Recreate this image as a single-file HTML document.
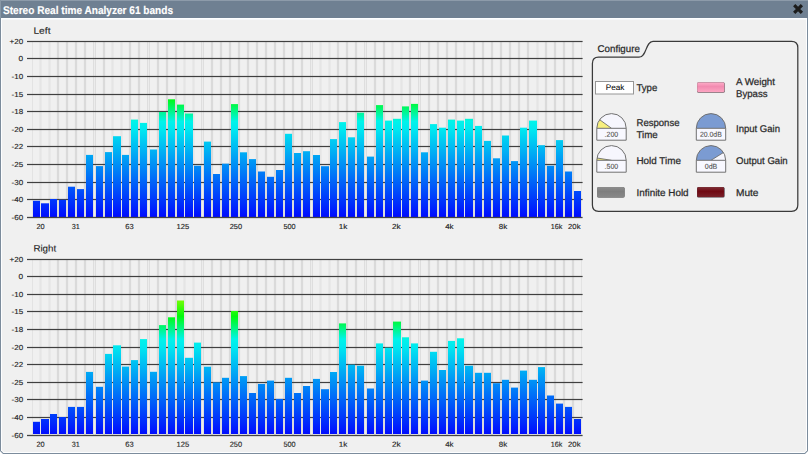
<!DOCTYPE html>
<html lang="en"><head><meta charset="utf-8"><title>Stereo Real time Analyzer 61 bands</title>
<style>html,body{margin:0;padding:0;background:#fff;overflow:hidden}svg{display:block;font-family:"Liberation Sans", sans-serif}</style>
</head><body>
<svg width="808" height="454" viewBox="0 0 808 454">
<defs>
<linearGradient id="gl" gradientUnits="userSpaceOnUse" x1="0" y1="41.4" x2="0" y2="217.4">
<stop offset="0.0000" stop-color="#ff0000"/>
<stop offset="0.1250" stop-color="#ffff00"/>
<stop offset="0.3239" stop-color="#00fa0c"/>
<stop offset="0.4545" stop-color="#00f4ea"/>
<stop offset="0.5000" stop-color="#00e8f0"/>
<stop offset="1.0000" stop-color="#000aff"/>
</linearGradient>
<linearGradient id="gr" gradientUnits="userSpaceOnUse" x1="0" y1="259.2" x2="0" y2="435.2">
<stop offset="0.0000" stop-color="#ff0000"/>
<stop offset="0.1250" stop-color="#ffff00"/>
<stop offset="0.3239" stop-color="#00fa0c"/>
<stop offset="0.4545" stop-color="#00f4ea"/>
<stop offset="0.5000" stop-color="#00e8f0"/>
<stop offset="1.0000" stop-color="#000aff"/>
</linearGradient>
</defs>
<path d="M0 0H808V451L805 454H3L0 451Z" fill="#7c8c9c"/>
<path d="M1 18H807V450.6L804.6 453H3.4L1 450.6Z" fill="#fdfeff"/>
<path d="M2 19H806V450.2L804.2 452H3.8L2 450.2Z" fill="#f0f0f0"/>
<rect x="2" y="19" width="804" height="1" fill="#f6f8fa"/>
<rect x="0" y="0" width="808" height="18" fill="#6f8092"/>
<rect x="0" y="0" width="808" height="1" fill="#8d9baa"/>
<rect x="0" y="0" width="1" height="18" fill="#8797a6"/>
<text x="3" y="14" font-size="11.2" fill="#fff" stroke="#fff" stroke-width="0.15" font-weight="bold" textLength="170" lengthAdjust="spacingAndGlyphs" transform="rotate(0.03 3 14)">Stereo Real time Analyzer 61 bands</text>
<path d="M794.2 5.2L801.9 12.9M801.9 5.2L794.2 12.9" stroke="#1c1c1c" stroke-width="3.2" stroke-linecap="butt" fill="none"/>
<rect x="32" y="41.4" width="1" height="176" fill="#e3e3e3"/>
<rect x="581" y="41.4" width="1" height="176" fill="#e3e3e3"/>
<rect x="39.3" y="41.4" width="2.4" height="176" fill="#e5e5e5"/>
<rect x="48.3" y="41.4" width="2.4" height="176" fill="#e5e5e5"/>
<rect x="56.85" y="41.4" width="2.3" height="176" fill="#dadada"/>
<rect x="65.85" y="41.4" width="2.3" height="176" fill="#dadada"/>
<rect x="74.85" y="41.4" width="2.3" height="176" fill="#dadada"/>
<rect x="83.85" y="41.4" width="2.3" height="176" fill="#dadada"/>
<rect x="93.1" y="41.4" width="1" height="176" fill="#dcdcdc"/><rect x="94.9" y="41.4" width="1" height="176" fill="#dcdcdc"/>
<rect x="102.85" y="41.4" width="2.3" height="176" fill="#dadada"/>
<rect x="111.3" y="41.4" width="2.4" height="176" fill="#e5e5e5"/>
<rect x="120.3" y="41.4" width="2.4" height="176" fill="#e5e5e5"/>
<rect x="128.85" y="41.4" width="2.3" height="176" fill="#dadada"/>
<rect x="137.85" y="41.4" width="2.3" height="176" fill="#dadada"/>
<rect x="147.1" y="41.4" width="1" height="176" fill="#dcdcdc"/><rect x="148.9" y="41.4" width="1" height="176" fill="#dcdcdc"/>
<rect x="156.85" y="41.4" width="2.3" height="176" fill="#dadada"/>
<rect x="165.85" y="41.4" width="2.3" height="176" fill="#dadada"/>
<rect x="174.85" y="41.4" width="2.3" height="176" fill="#dadada"/>
<rect x="183.3" y="41.4" width="2.4" height="176" fill="#e5e5e5"/>
<rect x="192.3" y="41.4" width="2.4" height="176" fill="#e5e5e5"/>
<rect x="201.1" y="41.4" width="1" height="176" fill="#dcdcdc"/><rect x="202.9" y="41.4" width="1" height="176" fill="#dcdcdc"/>
<rect x="210.85" y="41.4" width="2.3" height="176" fill="#dadada"/>
<rect x="219.85" y="41.4" width="2.3" height="176" fill="#dadada"/>
<rect x="228.85" y="41.4" width="2.3" height="176" fill="#dadada"/>
<rect x="237.85" y="41.4" width="2.3" height="176" fill="#dadada"/>
<rect x="246.85" y="41.4" width="2.3" height="176" fill="#dadada"/>
<rect x="255.85" y="41.4" width="2.3" height="176" fill="#dadada"/>
<rect x="264.85" y="41.4" width="2.3" height="176" fill="#dadada"/>
<rect x="273.85" y="41.4" width="2.3" height="176" fill="#dadada"/>
<rect x="282.85" y="41.4" width="2.3" height="176" fill="#dadada"/>
<rect x="291.85" y="41.4" width="2.3" height="176" fill="#dadada"/>
<rect x="300.85" y="41.4" width="2.3" height="176" fill="#dadada"/>
<rect x="310.1" y="41.4" width="1" height="176" fill="#dcdcdc"/><rect x="311.9" y="41.4" width="1" height="176" fill="#dcdcdc"/>
<rect x="319.3" y="41.4" width="2.4" height="176" fill="#e5e5e5"/>
<rect x="328.3" y="41.4" width="2.4" height="176" fill="#e5e5e5"/>
<rect x="336.85" y="41.4" width="2.3" height="176" fill="#dadada"/>
<rect x="345.85" y="41.4" width="2.3" height="176" fill="#dadada"/>
<rect x="354.85" y="41.4" width="2.3" height="176" fill="#dadada"/>
<rect x="364.1" y="41.4" width="1" height="176" fill="#dcdcdc"/><rect x="365.9" y="41.4" width="1" height="176" fill="#dcdcdc"/>
<rect x="373.85" y="41.4" width="2.3" height="176" fill="#dadada"/>
<rect x="382.85" y="41.4" width="2.3" height="176" fill="#dadada"/>
<rect x="391.3" y="41.4" width="2.4" height="176" fill="#e5e5e5"/>
<rect x="400.3" y="41.4" width="2.4" height="176" fill="#e5e5e5"/>
<rect x="408.85" y="41.4" width="2.3" height="176" fill="#dadada"/>
<rect x="418.1" y="41.4" width="1" height="176" fill="#dcdcdc"/><rect x="419.9" y="41.4" width="1" height="176" fill="#dcdcdc"/>
<rect x="427.85" y="41.4" width="2.3" height="176" fill="#dadada"/>
<rect x="436.85" y="41.4" width="2.3" height="176" fill="#dadada"/>
<rect x="445.85" y="41.4" width="2.3" height="176" fill="#dadada"/>
<rect x="454.85" y="41.4" width="2.3" height="176" fill="#dadada"/>
<rect x="463.3" y="41.4" width="2.4" height="176" fill="#e5e5e5"/>
<rect x="472.85" y="41.4" width="2.3" height="176" fill="#dadada"/>
<rect x="481.85" y="41.4" width="2.3" height="176" fill="#dadada"/>
<rect x="490.85" y="41.4" width="2.3" height="176" fill="#dadada"/>
<rect x="499.85" y="41.4" width="2.3" height="176" fill="#dadada"/>
<rect x="508.85" y="41.4" width="2.3" height="176" fill="#dadada"/>
<rect x="517.85" y="41.4" width="2.3" height="176" fill="#dadada"/>
<rect x="526.85" y="41.4" width="2.3" height="176" fill="#dadada"/>
<rect x="536.3" y="41.4" width="2.4" height="176" fill="#e5e5e5"/>
<rect x="544.85" y="41.4" width="2.3" height="176" fill="#dadada"/>
<rect x="553.85" y="41.4" width="2.3" height="176" fill="#dadada"/>
<rect x="562.85" y="41.4" width="2.3" height="176" fill="#dadada"/>
<rect x="571.85" y="41.4" width="2.3" height="176" fill="#dadada"/>
<g fill="#404040">
<rect x="27" y="40.90" width="555.6" height="1.2"/>
<rect x="27" y="57.90" width="555.6" height="1.2"/>
<rect x="27" y="75.90" width="555.6" height="1.2"/>
<rect x="27" y="93.90" width="555.6" height="1.2"/>
<rect x="27" y="110.90" width="555.6" height="1.2"/>
<rect x="27" y="128.90" width="555.6" height="1.2"/>
<rect x="27" y="145.90" width="555.6" height="1.2"/>
<rect x="27" y="163.90" width="555.6" height="1.2"/>
<rect x="27" y="181.90" width="555.6" height="1.2"/>
<rect x="27" y="198.90" width="555.6" height="1.2"/>
</g>
<g fill="url(#gl)">
<rect x="33" y="200.8" width="7" height="16.2"/>
<rect x="41" y="203.3" width="8" height="13.7"/>
<rect x="50" y="199.0" width="7" height="18.0"/>
<rect x="59" y="199.8" width="7" height="17.2"/>
<rect x="68" y="186.7" width="7" height="30.3"/>
<rect x="77" y="189.1" width="7" height="27.9"/>
<rect x="86" y="154.9" width="7" height="62.1"/>
<rect x="96" y="166.1" width="7" height="50.9"/>
<rect x="105" y="152.1" width="7" height="64.9"/>
<rect x="113" y="136.2" width="8" height="80.8"/>
<rect x="122" y="154.9" width="7" height="62.1"/>
<rect x="131" y="119.6" width="7" height="97.4"/>
<rect x="140" y="122.9" width="7" height="94.1"/>
<rect x="150" y="149.5" width="7" height="67.5"/>
<rect x="159" y="112.0" width="7" height="105.0"/>
<rect x="168" y="99.3" width="7" height="117.7"/>
<rect x="177" y="104.6" width="7" height="112.4"/>
<rect x="185" y="113.5" width="8" height="103.5"/>
<rect x="194" y="165.7" width="7" height="51.3"/>
<rect x="204" y="141.6" width="7" height="75.4"/>
<rect x="213" y="174.0" width="7" height="43.0"/>
<rect x="222" y="163.7" width="7" height="53.3"/>
<rect x="231" y="104.1" width="7" height="112.9"/>
<rect x="240" y="152.3" width="7" height="64.7"/>
<rect x="249" y="159.1" width="7" height="57.9"/>
<rect x="258" y="171.5" width="7" height="45.5"/>
<rect x="267" y="176.8" width="7" height="40.2"/>
<rect x="276" y="170.0" width="7" height="47.0"/>
<rect x="285" y="133.8" width="7" height="83.2"/>
<rect x="294" y="153.0" width="7" height="64.0"/>
<rect x="303" y="151.2" width="7" height="65.8"/>
<rect x="313" y="155.0" width="7" height="62.0"/>
<rect x="321" y="166.2" width="8" height="50.8"/>
<rect x="330" y="139.1" width="7" height="77.9"/>
<rect x="339" y="122.1" width="7" height="94.9"/>
<rect x="348" y="137.3" width="7" height="79.7"/>
<rect x="357" y="112.7" width="7" height="104.3"/>
<rect x="367" y="156.6" width="7" height="60.4"/>
<rect x="376" y="105.1" width="7" height="111.9"/>
<rect x="385" y="120.6" width="7" height="96.4"/>
<rect x="393" y="118.8" width="8" height="98.2"/>
<rect x="402" y="106.4" width="7" height="110.6"/>
<rect x="411" y="103.9" width="7" height="113.1"/>
<rect x="421" y="152.3" width="7" height="64.7"/>
<rect x="430" y="124.1" width="7" height="92.9"/>
<rect x="439" y="127.7" width="7" height="89.3"/>
<rect x="448" y="119.6" width="7" height="97.4"/>
<rect x="457" y="120.6" width="7" height="96.4"/>
<rect x="465" y="118.8" width="8" height="98.2"/>
<rect x="475" y="125.9" width="7" height="91.1"/>
<rect x="484" y="140.9" width="7" height="76.1"/>
<rect x="493" y="158.3" width="7" height="58.7"/>
<rect x="502" y="135.5" width="7" height="81.5"/>
<rect x="511" y="161.1" width="7" height="55.9"/>
<rect x="520" y="127.7" width="7" height="89.3"/>
<rect x="529" y="120.6" width="8" height="96.4"/>
<rect x="538" y="145.2" width="7" height="71.8"/>
<rect x="547" y="165.7" width="7" height="51.3"/>
<rect x="556" y="140.1" width="7" height="76.9"/>
<rect x="565" y="171.5" width="7" height="45.5"/>
<rect x="574" y="191.0" width="7" height="26.0"/>
</g>
<rect x="27" y="216.85" width="555.6" height="1.3" fill="#444"/>
<text x="9.5" y="44.1" font-size="7.3" fill="#222" stroke="#222" stroke-width="0.12" font-weight="normal" textLength="13.6" lengthAdjust="spacingAndGlyphs" transform="rotate(0.03 9.5 44.1)">+20</text>
<text x="18.5" y="61.1" font-size="7.3" fill="#222" stroke="#222" stroke-width="0.12" font-weight="normal" textLength="4.6" lengthAdjust="spacingAndGlyphs" transform="rotate(0.03 18.5 61.1)">0</text>
<text x="11.5" y="79.1" font-size="7.3" fill="#222" stroke="#222" stroke-width="0.12" font-weight="normal" textLength="11.6" lengthAdjust="spacingAndGlyphs" transform="rotate(0.03 11.5 79.1)">-10</text>
<text x="11.5" y="97.1" font-size="7.3" fill="#222" stroke="#222" stroke-width="0.12" font-weight="normal" textLength="11.6" lengthAdjust="spacingAndGlyphs" transform="rotate(0.03 11.5 97.1)">-15</text>
<text x="11.5" y="114.1" font-size="7.3" fill="#222" stroke="#222" stroke-width="0.12" font-weight="normal" textLength="11.6" lengthAdjust="spacingAndGlyphs" transform="rotate(0.03 11.5 114.1)">-18</text>
<text x="11.5" y="132.1" font-size="7.3" fill="#222" stroke="#222" stroke-width="0.12" font-weight="normal" textLength="11.6" lengthAdjust="spacingAndGlyphs" transform="rotate(0.03 11.5 132.1)">-20</text>
<text x="11.5" y="149.1" font-size="7.3" fill="#222" stroke="#222" stroke-width="0.12" font-weight="normal" textLength="11.6" lengthAdjust="spacingAndGlyphs" transform="rotate(0.03 11.5 149.1)">-22</text>
<text x="11.5" y="167.1" font-size="7.3" fill="#222" stroke="#222" stroke-width="0.12" font-weight="normal" textLength="11.6" lengthAdjust="spacingAndGlyphs" transform="rotate(0.03 11.5 167.1)">-25</text>
<text x="11.5" y="185.1" font-size="7.3" fill="#222" stroke="#222" stroke-width="0.12" font-weight="normal" textLength="11.6" lengthAdjust="spacingAndGlyphs" transform="rotate(0.03 11.5 185.1)">-30</text>
<text x="11.5" y="202.1" font-size="7.3" fill="#222" stroke="#222" stroke-width="0.12" font-weight="normal" textLength="11.6" lengthAdjust="spacingAndGlyphs" transform="rotate(0.03 11.5 202.1)">-40</text>
<text x="11.5" y="220.1" font-size="7.3" fill="#222" stroke="#222" stroke-width="0.12" font-weight="normal" textLength="11.6" lengthAdjust="spacingAndGlyphs" transform="rotate(0.03 11.5 220.1)">-60</text>
<text x="36.5" y="229.0" font-size="7.3" fill="#222" stroke="#222" stroke-width="0.12" font-weight="normal" textLength="8.2" lengthAdjust="spacingAndGlyphs" transform="rotate(0.03 36.5 229.0)">20</text>
<text x="71.8" y="229.0" font-size="7.3" fill="#222" stroke="#222" stroke-width="0.12" font-weight="normal" textLength="8.1" lengthAdjust="spacingAndGlyphs" transform="rotate(0.03 71.8 229.0)">31</text>
<text x="125.2" y="229.0" font-size="7.3" fill="#222" stroke="#222" stroke-width="0.12" font-weight="normal" textLength="8.4" lengthAdjust="spacingAndGlyphs" transform="rotate(0.03 125.2 229.0)">63</text>
<text x="176.5" y="229.0" font-size="7.3" fill="#222" stroke="#222" stroke-width="0.12" font-weight="normal" textLength="12.7" lengthAdjust="spacingAndGlyphs" transform="rotate(0.03 176.5 229.0)">125</text>
<text x="229.7" y="229.0" font-size="7.3" fill="#222" stroke="#222" stroke-width="0.12" font-weight="normal" textLength="12.4" lengthAdjust="spacingAndGlyphs" transform="rotate(0.03 229.7 229.0)">250</text>
<text x="283.4" y="229.0" font-size="7.3" fill="#222" stroke="#222" stroke-width="0.12" font-weight="normal" textLength="12.2" lengthAdjust="spacingAndGlyphs" transform="rotate(0.03 283.4 229.0)">500</text>
<text x="338.8" y="229.0" font-size="7.3" fill="#222" stroke="#222" stroke-width="0.12" font-weight="normal" textLength="8.6" lengthAdjust="spacingAndGlyphs" transform="rotate(0.03 338.8 229.0)">1k</text>
<text x="391.9" y="229.0" font-size="7.3" fill="#222" stroke="#222" stroke-width="0.12" font-weight="normal" textLength="8.7" lengthAdjust="spacingAndGlyphs" transform="rotate(0.03 391.9 229.0)">2k</text>
<text x="445.2" y="229.0" font-size="7.3" fill="#222" stroke="#222" stroke-width="0.12" font-weight="normal" textLength="8.4" lengthAdjust="spacingAndGlyphs" transform="rotate(0.03 445.2 229.0)">4k</text>
<text x="498.8" y="229.0" font-size="7.3" fill="#222" stroke="#222" stroke-width="0.12" font-weight="normal" textLength="8.4" lengthAdjust="spacingAndGlyphs" transform="rotate(0.03 498.8 229.0)">8k</text>
<text x="550.8" y="229.0" font-size="7.3" fill="#222" stroke="#222" stroke-width="0.12" font-weight="normal" textLength="11.5" lengthAdjust="spacingAndGlyphs" transform="rotate(0.03 550.8 229.0)">16k</text>
<text x="568.1" y="229.0" font-size="7.3" fill="#222" stroke="#222" stroke-width="0.12" font-weight="normal" textLength="12.4" lengthAdjust="spacingAndGlyphs" transform="rotate(0.03 568.1 229.0)">20k</text>
<text x="33.4" y="33.8" font-size="9.2" fill="#222" stroke="#222" stroke-width="0.1" font-weight="normal" textLength="17.2" lengthAdjust="spacingAndGlyphs" transform="rotate(0.03 33.4 33.8)">Left</text>
<rect x="32" y="259.2" width="1" height="176" fill="#e3e3e3"/>
<rect x="581" y="259.2" width="1" height="176" fill="#e3e3e3"/>
<rect x="39.3" y="259.2" width="2.4" height="176" fill="#e5e5e5"/>
<rect x="48.3" y="259.2" width="2.4" height="176" fill="#e5e5e5"/>
<rect x="56.85" y="259.2" width="2.3" height="176" fill="#dadada"/>
<rect x="65.85" y="259.2" width="2.3" height="176" fill="#dadada"/>
<rect x="74.85" y="259.2" width="2.3" height="176" fill="#dadada"/>
<rect x="83.85" y="259.2" width="2.3" height="176" fill="#dadada"/>
<rect x="93.1" y="259.2" width="1" height="176" fill="#dcdcdc"/><rect x="94.9" y="259.2" width="1" height="176" fill="#dcdcdc"/>
<rect x="102.85" y="259.2" width="2.3" height="176" fill="#dadada"/>
<rect x="111.3" y="259.2" width="2.4" height="176" fill="#e5e5e5"/>
<rect x="120.3" y="259.2" width="2.4" height="176" fill="#e5e5e5"/>
<rect x="128.85" y="259.2" width="2.3" height="176" fill="#dadada"/>
<rect x="137.85" y="259.2" width="2.3" height="176" fill="#dadada"/>
<rect x="147.1" y="259.2" width="1" height="176" fill="#dcdcdc"/><rect x="148.9" y="259.2" width="1" height="176" fill="#dcdcdc"/>
<rect x="156.85" y="259.2" width="2.3" height="176" fill="#dadada"/>
<rect x="165.85" y="259.2" width="2.3" height="176" fill="#dadada"/>
<rect x="174.85" y="259.2" width="2.3" height="176" fill="#dadada"/>
<rect x="183.3" y="259.2" width="2.4" height="176" fill="#e5e5e5"/>
<rect x="192.3" y="259.2" width="2.4" height="176" fill="#e5e5e5"/>
<rect x="201.1" y="259.2" width="1" height="176" fill="#dcdcdc"/><rect x="202.9" y="259.2" width="1" height="176" fill="#dcdcdc"/>
<rect x="210.85" y="259.2" width="2.3" height="176" fill="#dadada"/>
<rect x="219.85" y="259.2" width="2.3" height="176" fill="#dadada"/>
<rect x="228.85" y="259.2" width="2.3" height="176" fill="#dadada"/>
<rect x="237.85" y="259.2" width="2.3" height="176" fill="#dadada"/>
<rect x="246.85" y="259.2" width="2.3" height="176" fill="#dadada"/>
<rect x="255.85" y="259.2" width="2.3" height="176" fill="#dadada"/>
<rect x="264.85" y="259.2" width="2.3" height="176" fill="#dadada"/>
<rect x="273.85" y="259.2" width="2.3" height="176" fill="#dadada"/>
<rect x="282.85" y="259.2" width="2.3" height="176" fill="#dadada"/>
<rect x="291.85" y="259.2" width="2.3" height="176" fill="#dadada"/>
<rect x="300.85" y="259.2" width="2.3" height="176" fill="#dadada"/>
<rect x="310.1" y="259.2" width="1" height="176" fill="#dcdcdc"/><rect x="311.9" y="259.2" width="1" height="176" fill="#dcdcdc"/>
<rect x="319.3" y="259.2" width="2.4" height="176" fill="#e5e5e5"/>
<rect x="328.3" y="259.2" width="2.4" height="176" fill="#e5e5e5"/>
<rect x="336.85" y="259.2" width="2.3" height="176" fill="#dadada"/>
<rect x="345.85" y="259.2" width="2.3" height="176" fill="#dadada"/>
<rect x="354.85" y="259.2" width="2.3" height="176" fill="#dadada"/>
<rect x="364.1" y="259.2" width="1" height="176" fill="#dcdcdc"/><rect x="365.9" y="259.2" width="1" height="176" fill="#dcdcdc"/>
<rect x="373.85" y="259.2" width="2.3" height="176" fill="#dadada"/>
<rect x="382.85" y="259.2" width="2.3" height="176" fill="#dadada"/>
<rect x="391.3" y="259.2" width="2.4" height="176" fill="#e5e5e5"/>
<rect x="400.3" y="259.2" width="2.4" height="176" fill="#e5e5e5"/>
<rect x="408.85" y="259.2" width="2.3" height="176" fill="#dadada"/>
<rect x="418.1" y="259.2" width="1" height="176" fill="#dcdcdc"/><rect x="419.9" y="259.2" width="1" height="176" fill="#dcdcdc"/>
<rect x="427.85" y="259.2" width="2.3" height="176" fill="#dadada"/>
<rect x="436.85" y="259.2" width="2.3" height="176" fill="#dadada"/>
<rect x="445.85" y="259.2" width="2.3" height="176" fill="#dadada"/>
<rect x="454.85" y="259.2" width="2.3" height="176" fill="#dadada"/>
<rect x="463.3" y="259.2" width="2.4" height="176" fill="#e5e5e5"/>
<rect x="472.85" y="259.2" width="2.3" height="176" fill="#dadada"/>
<rect x="481.85" y="259.2" width="2.3" height="176" fill="#dadada"/>
<rect x="490.85" y="259.2" width="2.3" height="176" fill="#dadada"/>
<rect x="499.85" y="259.2" width="2.3" height="176" fill="#dadada"/>
<rect x="508.85" y="259.2" width="2.3" height="176" fill="#dadada"/>
<rect x="517.85" y="259.2" width="2.3" height="176" fill="#dadada"/>
<rect x="526.85" y="259.2" width="2.3" height="176" fill="#dadada"/>
<rect x="536.3" y="259.2" width="2.4" height="176" fill="#e5e5e5"/>
<rect x="544.85" y="259.2" width="2.3" height="176" fill="#dadada"/>
<rect x="553.85" y="259.2" width="2.3" height="176" fill="#dadada"/>
<rect x="562.85" y="259.2" width="2.3" height="176" fill="#dadada"/>
<rect x="571.85" y="259.2" width="2.3" height="176" fill="#dadada"/>
<g fill="#404040">
<rect x="27" y="258.90" width="555.6" height="1.2"/>
<rect x="27" y="275.90" width="555.6" height="1.2"/>
<rect x="27" y="293.90" width="555.6" height="1.2"/>
<rect x="27" y="310.90" width="555.6" height="1.2"/>
<rect x="27" y="328.90" width="555.6" height="1.2"/>
<rect x="27" y="346.90" width="555.6" height="1.2"/>
<rect x="27" y="363.90" width="555.6" height="1.2"/>
<rect x="27" y="381.90" width="555.6" height="1.2"/>
<rect x="27" y="398.90" width="555.6" height="1.2"/>
<rect x="27" y="416.90" width="555.6" height="1.2"/>
</g>
<g fill="url(#gr)">
<rect x="33" y="421.8" width="7" height="12.2"/>
<rect x="41" y="419.0" width="8" height="15.0"/>
<rect x="50" y="414.0" width="7" height="20.0"/>
<rect x="59" y="417.0" width="7" height="17.0"/>
<rect x="68" y="406.9" width="7" height="27.1"/>
<rect x="77" y="406.9" width="7" height="27.1"/>
<rect x="86" y="371.9" width="7" height="62.1"/>
<rect x="96" y="386.8" width="7" height="47.2"/>
<rect x="105" y="353.9" width="7" height="80.1"/>
<rect x="113" y="345.3" width="8" height="88.7"/>
<rect x="122" y="366.6" width="7" height="67.4"/>
<rect x="131" y="360.1" width="7" height="73.9"/>
<rect x="140" y="339.1" width="7" height="94.9"/>
<rect x="150" y="371.8" width="7" height="62.2"/>
<rect x="159" y="325.1" width="7" height="108.9"/>
<rect x="168" y="317.3" width="7" height="116.7"/>
<rect x="177" y="300.5" width="7" height="133.5"/>
<rect x="185" y="357.8" width="8" height="76.2"/>
<rect x="194" y="342.6" width="7" height="91.4"/>
<rect x="204" y="366.7" width="7" height="67.3"/>
<rect x="213" y="382.4" width="7" height="51.6"/>
<rect x="222" y="377.8" width="7" height="56.2"/>
<rect x="231" y="311.0" width="7" height="123.0"/>
<rect x="240" y="376.1" width="7" height="57.9"/>
<rect x="249" y="393.0" width="7" height="41.0"/>
<rect x="258" y="383.9" width="7" height="50.1"/>
<rect x="267" y="380.6" width="7" height="53.4"/>
<rect x="276" y="398.9" width="7" height="35.1"/>
<rect x="285" y="377.8" width="7" height="56.2"/>
<rect x="294" y="393.0" width="7" height="41.0"/>
<rect x="303" y="386.0" width="7" height="48.0"/>
<rect x="313" y="378.9" width="7" height="55.1"/>
<rect x="321" y="389.2" width="8" height="44.8"/>
<rect x="330" y="372.0" width="7" height="62.0"/>
<rect x="339" y="323.4" width="7" height="110.6"/>
<rect x="348" y="364.7" width="7" height="69.3"/>
<rect x="357" y="365.7" width="7" height="68.3"/>
<rect x="367" y="388.5" width="7" height="45.5"/>
<rect x="376" y="343.4" width="7" height="90.6"/>
<rect x="385" y="347.7" width="7" height="86.3"/>
<rect x="393" y="321.6" width="8" height="112.4"/>
<rect x="402" y="337.3" width="7" height="96.7"/>
<rect x="411" y="343.4" width="7" height="90.6"/>
<rect x="421" y="380.6" width="7" height="53.4"/>
<rect x="430" y="351.8" width="7" height="82.2"/>
<rect x="439" y="370.0" width="7" height="64.0"/>
<rect x="448" y="340.9" width="7" height="93.1"/>
<rect x="457" y="338.3" width="7" height="95.7"/>
<rect x="465" y="365.7" width="8" height="68.3"/>
<rect x="475" y="372.8" width="7" height="61.2"/>
<rect x="484" y="372.8" width="7" height="61.2"/>
<rect x="493" y="383.2" width="7" height="50.8"/>
<rect x="502" y="379.8" width="7" height="54.2"/>
<rect x="511" y="387.6" width="7" height="46.4"/>
<rect x="520" y="370.6" width="7" height="63.4"/>
<rect x="529" y="379.8" width="8" height="54.2"/>
<rect x="538" y="367.1" width="7" height="66.9"/>
<rect x="547" y="395.5" width="7" height="38.5"/>
<rect x="556" y="403.6" width="7" height="30.4"/>
<rect x="565" y="406.9" width="7" height="27.1"/>
<rect x="574" y="419.0" width="7" height="15.0"/>
</g>
<rect x="27" y="434.85" width="555.6" height="1.3" fill="#444"/>
<text x="9.5" y="262.1" font-size="7.3" fill="#222" stroke="#222" stroke-width="0.12" font-weight="normal" textLength="13.6" lengthAdjust="spacingAndGlyphs" transform="rotate(0.03 9.5 262.1)">+20</text>
<text x="18.5" y="279.1" font-size="7.3" fill="#222" stroke="#222" stroke-width="0.12" font-weight="normal" textLength="4.6" lengthAdjust="spacingAndGlyphs" transform="rotate(0.03 18.5 279.1)">0</text>
<text x="11.5" y="297.1" font-size="7.3" fill="#222" stroke="#222" stroke-width="0.12" font-weight="normal" textLength="11.6" lengthAdjust="spacingAndGlyphs" transform="rotate(0.03 11.5 297.1)">-10</text>
<text x="11.5" y="314.1" font-size="7.3" fill="#222" stroke="#222" stroke-width="0.12" font-weight="normal" textLength="11.6" lengthAdjust="spacingAndGlyphs" transform="rotate(0.03 11.5 314.1)">-15</text>
<text x="11.5" y="332.1" font-size="7.3" fill="#222" stroke="#222" stroke-width="0.12" font-weight="normal" textLength="11.6" lengthAdjust="spacingAndGlyphs" transform="rotate(0.03 11.5 332.1)">-18</text>
<text x="11.5" y="350.1" font-size="7.3" fill="#222" stroke="#222" stroke-width="0.12" font-weight="normal" textLength="11.6" lengthAdjust="spacingAndGlyphs" transform="rotate(0.03 11.5 350.1)">-20</text>
<text x="11.5" y="367.1" font-size="7.3" fill="#222" stroke="#222" stroke-width="0.12" font-weight="normal" textLength="11.6" lengthAdjust="spacingAndGlyphs" transform="rotate(0.03 11.5 367.1)">-22</text>
<text x="11.5" y="385.1" font-size="7.3" fill="#222" stroke="#222" stroke-width="0.12" font-weight="normal" textLength="11.6" lengthAdjust="spacingAndGlyphs" transform="rotate(0.03 11.5 385.1)">-25</text>
<text x="11.5" y="402.1" font-size="7.3" fill="#222" stroke="#222" stroke-width="0.12" font-weight="normal" textLength="11.6" lengthAdjust="spacingAndGlyphs" transform="rotate(0.03 11.5 402.1)">-30</text>
<text x="11.5" y="420.1" font-size="7.3" fill="#222" stroke="#222" stroke-width="0.12" font-weight="normal" textLength="11.6" lengthAdjust="spacingAndGlyphs" transform="rotate(0.03 11.5 420.1)">-40</text>
<text x="11.5" y="438.1" font-size="7.3" fill="#222" stroke="#222" stroke-width="0.12" font-weight="normal" textLength="11.6" lengthAdjust="spacingAndGlyphs" transform="rotate(0.03 11.5 438.1)">-60</text>
<text x="36.5" y="446.8" font-size="7.3" fill="#222" stroke="#222" stroke-width="0.12" font-weight="normal" textLength="8.2" lengthAdjust="spacingAndGlyphs" transform="rotate(0.03 36.5 446.8)">20</text>
<text x="71.8" y="446.8" font-size="7.3" fill="#222" stroke="#222" stroke-width="0.12" font-weight="normal" textLength="8.1" lengthAdjust="spacingAndGlyphs" transform="rotate(0.03 71.8 446.8)">31</text>
<text x="125.2" y="446.8" font-size="7.3" fill="#222" stroke="#222" stroke-width="0.12" font-weight="normal" textLength="8.4" lengthAdjust="spacingAndGlyphs" transform="rotate(0.03 125.2 446.8)">63</text>
<text x="176.5" y="446.8" font-size="7.3" fill="#222" stroke="#222" stroke-width="0.12" font-weight="normal" textLength="12.7" lengthAdjust="spacingAndGlyphs" transform="rotate(0.03 176.5 446.8)">125</text>
<text x="229.7" y="446.8" font-size="7.3" fill="#222" stroke="#222" stroke-width="0.12" font-weight="normal" textLength="12.4" lengthAdjust="spacingAndGlyphs" transform="rotate(0.03 229.7 446.8)">250</text>
<text x="283.4" y="446.8" font-size="7.3" fill="#222" stroke="#222" stroke-width="0.12" font-weight="normal" textLength="12.2" lengthAdjust="spacingAndGlyphs" transform="rotate(0.03 283.4 446.8)">500</text>
<text x="338.8" y="446.8" font-size="7.3" fill="#222" stroke="#222" stroke-width="0.12" font-weight="normal" textLength="8.6" lengthAdjust="spacingAndGlyphs" transform="rotate(0.03 338.8 446.8)">1k</text>
<text x="391.9" y="446.8" font-size="7.3" fill="#222" stroke="#222" stroke-width="0.12" font-weight="normal" textLength="8.7" lengthAdjust="spacingAndGlyphs" transform="rotate(0.03 391.9 446.8)">2k</text>
<text x="445.2" y="446.8" font-size="7.3" fill="#222" stroke="#222" stroke-width="0.12" font-weight="normal" textLength="8.4" lengthAdjust="spacingAndGlyphs" transform="rotate(0.03 445.2 446.8)">4k</text>
<text x="498.8" y="446.8" font-size="7.3" fill="#222" stroke="#222" stroke-width="0.12" font-weight="normal" textLength="8.4" lengthAdjust="spacingAndGlyphs" transform="rotate(0.03 498.8 446.8)">8k</text>
<text x="550.8" y="446.8" font-size="7.3" fill="#222" stroke="#222" stroke-width="0.12" font-weight="normal" textLength="11.5" lengthAdjust="spacingAndGlyphs" transform="rotate(0.03 550.8 446.8)">16k</text>
<text x="568.1" y="446.8" font-size="7.3" fill="#222" stroke="#222" stroke-width="0.12" font-weight="normal" textLength="12.4" lengthAdjust="spacingAndGlyphs" transform="rotate(0.03 568.1 446.8)">20k</text>
<text x="33.4" y="251.6" font-size="9.2" fill="#222" stroke="#222" stroke-width="0.1" font-weight="normal" textLength="22.8" lengthAdjust="spacingAndGlyphs" transform="rotate(0.03 33.4 251.6)">Right</text>
<path d="M592.4 63.5Q592.4 57.2 598.5 57.2H639C647 57.2 645.3 41.3 653 41.3H791.5Q797.8 41.3 797.8 47.5V205Q797.8 211.3 791.5 211.3H598.5Q592.4 211.3 592.4 205Z" fill="none" stroke="#3a3a3a" stroke-width="1.25"/>
<text x="597.6" y="52" font-size="9.8" fill="#2a2a2a" stroke="#2a2a2a" stroke-width="0.25" font-weight="normal" textLength="42.2" lengthAdjust="spacingAndGlyphs" transform="rotate(0.03 597.6 52)">Configure</text>
<rect x="595.5" y="81.5" width="38" height="12.5" fill="#fff" stroke="#969696" stroke-width="1"/>
<text x="605.7" y="90" font-size="8" fill="#000" stroke="#000" stroke-width="0.05" font-weight="normal" textLength="18.6" lengthAdjust="spacingAndGlyphs" transform="rotate(0.03 605.7 90)">Peak</text>
<text x="636.5" y="91" font-size="9.8" fill="#2a2a2a" stroke="#2a2a2a" stroke-width="0.25" font-weight="normal" textLength="20.8" lengthAdjust="spacingAndGlyphs" transform="rotate(0.03 636.5 91)">Type</text>
<defs>
<linearGradient id="pk" x1="0" y1="0" x2="0" y2="1"><stop offset="0" stop-color="#fdaac6"/><stop offset="0.4" stop-color="#f28cb1"/><stop offset="1" stop-color="#fda5c2"/></linearGradient>
<linearGradient id="gy" x1="0" y1="0" x2="0" y2="1"><stop offset="0" stop-color="#8c8c8c"/><stop offset="0.4" stop-color="#7e7e7e"/><stop offset="1" stop-color="#888888"/></linearGradient>
<linearGradient id="rd" x1="0" y1="0" x2="0" y2="1"><stop offset="0" stop-color="#7c2a31"/><stop offset="0.4" stop-color="#700812"/><stop offset="1" stop-color="#782028"/></linearGradient>
</defs>
<rect x="697" y="82.2" width="27.8" height="10.6" rx="1.6" fill="#7d5f6b"/>
<rect x="697.3" y="82.2" width="26.900000000000002" height="9.9" rx="1.4" fill="#c895a6"/>
<rect x="697.4" y="82.8" width="26.7" height="9.299999999999999" rx="1.1" fill="url(#pk)"/>
<text x="736" y="85" font-size="9.8" fill="#2a2a2a" stroke="#2a2a2a" stroke-width="0.25" font-weight="normal" textLength="39" lengthAdjust="spacingAndGlyphs" transform="rotate(0.03 736 85)">A Weight</text>
<text x="736" y="97" font-size="9.8" fill="#2a2a2a" stroke="#2a2a2a" stroke-width="0.25" font-weight="normal" textLength="31.5" lengthAdjust="spacingAndGlyphs" transform="rotate(0.03 736 97)">Bypass</text>
<path d="M596.8 128.3A14.7 14.7 0 0 1 626.2 128.3Z" fill="#f6f6fd"/>
<path d="M611.5 128.3L596.8 128.3A14.7 14.7 0 0 1 599.61 119.66Z" fill="#f7ef7e"/>
<path d="M611.5 128.3L599.61 119.66" stroke="#6c6c6c" stroke-width="0.9" fill="none"/>
<rect x="596.8" y="128.3" width="29.4" height="11.9" fill="#f8f8ff"/>
<path d="M596.8 140.20000000000002V128.3A14.7 14.7 0 0 1 626.2 128.3V140.20000000000002Z M596.8 128.3H626.2" fill="none" stroke="#707070" stroke-width="1"/>
<text x="604.5999999999999" y="136.8" font-size="7.1" fill="#505050" stroke="#505050" stroke-width="0.1" font-weight="normal" textLength="13.6" lengthAdjust="spacingAndGlyphs" transform="rotate(0.03 604.5999999999999 136.8)">.200</text>
<path d="M596.8 160.3A14.7 14.7 0 0 1 626.2 160.3Z" fill="#f6f6fd"/>
<path d="M611.5 160.3L596.8 160.3A14.7 14.7 0 0 1 596.98 158.00Z" fill="#f7ef7e"/>
<path d="M611.5 160.3L596.98 158.00" stroke="#6c6c6c" stroke-width="0.9" fill="none"/>
<rect x="596.8" y="160.3" width="29.4" height="11.9" fill="#f8f8ff"/>
<path d="M596.8 172.20000000000002V160.3A14.7 14.7 0 0 1 626.2 160.3V172.20000000000002Z M596.8 160.3H626.2" fill="none" stroke="#707070" stroke-width="1"/>
<text x="604.5999999999999" y="168.8" font-size="7.1" fill="#505050" stroke="#505050" stroke-width="0.1" font-weight="normal" textLength="13.6" lengthAdjust="spacingAndGlyphs" transform="rotate(0.03 604.5999999999999 168.8)">.500</text>
<path d="M696.3 128.3A14.7 14.7 0 0 1 725.7 128.3Z" fill="#f6f6fd"/>
<path d="M696.3 128.3A14.7 14.7 0 0 1 725.7 128.3Z" fill="#7b9bd2"/>
<rect x="696.3" y="128.3" width="29.4" height="11.9" fill="#f8f8ff"/>
<path d="M696.3 140.20000000000002V128.3A14.7 14.7 0 0 1 725.7 128.3V140.20000000000002Z M696.3 128.3H725.7" fill="none" stroke="#707070" stroke-width="1"/>
<text x="699.9" y="136.8" font-size="7.1" fill="#505050" stroke="#505050" stroke-width="0.1" font-weight="normal" textLength="21.9" lengthAdjust="spacingAndGlyphs" transform="rotate(0.03 699.9 136.8)">20.0dB</text>
<path d="M696.3 160.3A14.7 14.7 0 0 1 725.7 160.3Z" fill="#f6f6fd"/>
<path d="M711 160.3L696.3 160.3A14.7 14.7 0 0 1 723.47 152.51Z" fill="#7b9bd2"/>
<path d="M711 160.3L723.47 152.51" stroke="#6c6c6c" stroke-width="0.9" fill="none"/>
<rect x="696.3" y="160.3" width="29.4" height="11.9" fill="#f8f8ff"/>
<path d="M696.3 172.20000000000002V160.3A14.7 14.7 0 0 1 725.7 160.3V172.20000000000002Z M696.3 160.3H725.7" fill="none" stroke="#707070" stroke-width="1"/>
<text x="704.8" y="168.8" font-size="7.1" fill="#505050" stroke="#505050" stroke-width="0.1" font-weight="normal" textLength="12.5" lengthAdjust="spacingAndGlyphs" transform="rotate(0.03 704.8 168.8)">0dB</text>
<text x="636.5" y="126" font-size="9.8" fill="#2a2a2a" stroke="#2a2a2a" stroke-width="0.25" font-weight="normal" textLength="43" lengthAdjust="spacingAndGlyphs" transform="rotate(0.03 636.5 126)">Response</text>
<text x="636.5" y="138" font-size="9.8" fill="#2a2a2a" stroke="#2a2a2a" stroke-width="0.25" font-weight="normal" textLength="21.3" lengthAdjust="spacingAndGlyphs" transform="rotate(0.03 636.5 138)">Time</text>
<text x="636.5" y="164" font-size="9.8" fill="#2a2a2a" stroke="#2a2a2a" stroke-width="0.25" font-weight="normal" textLength="44.4" lengthAdjust="spacingAndGlyphs" transform="rotate(0.03 636.5 164)">Hold Time</text>
<text x="736" y="132" font-size="9.8" fill="#2a2a2a" stroke="#2a2a2a" stroke-width="0.25" font-weight="normal" textLength="44" lengthAdjust="spacingAndGlyphs" transform="rotate(0.03 736 132)">Input Gain</text>
<text x="736" y="164" font-size="9.8" fill="#2a2a2a" stroke="#2a2a2a" stroke-width="0.25" font-weight="normal" textLength="51.6" lengthAdjust="spacingAndGlyphs" transform="rotate(0.03 736 164)">Output Gain</text>
<rect x="597" y="187" width="27.8" height="10.7" rx="1.6" fill="#6e6e6e"/>
<rect x="597.3" y="187" width="26.900000000000002" height="10.0" rx="1.4" fill="#8a8a8a"/>
<rect x="597.4" y="187.6" width="26.7" height="9.399999999999999" rx="1.1" fill="url(#gy)"/>
<rect x="697" y="187" width="27.6" height="10.6" rx="1.6" fill="#43303a"/>
<rect x="697.3" y="187" width="26.700000000000003" height="9.9" rx="1.4" fill="#7a3038"/>
<rect x="697.4" y="187.6" width="26.5" height="9.299999999999999" rx="1.1" fill="url(#rd)"/>
<text x="636.5" y="196" font-size="9.8" fill="#2a2a2a" stroke="#2a2a2a" stroke-width="0.25" font-weight="normal" textLength="52.1" lengthAdjust="spacingAndGlyphs" transform="rotate(0.03 636.5 196)">Infinite Hold</text>
<text x="736" y="196" font-size="9.8" fill="#2a2a2a" stroke="#2a2a2a" stroke-width="0.25" font-weight="normal" textLength="22.5" lengthAdjust="spacingAndGlyphs" transform="rotate(0.03 736 196)">Mute</text>
</svg>
</body></html>
